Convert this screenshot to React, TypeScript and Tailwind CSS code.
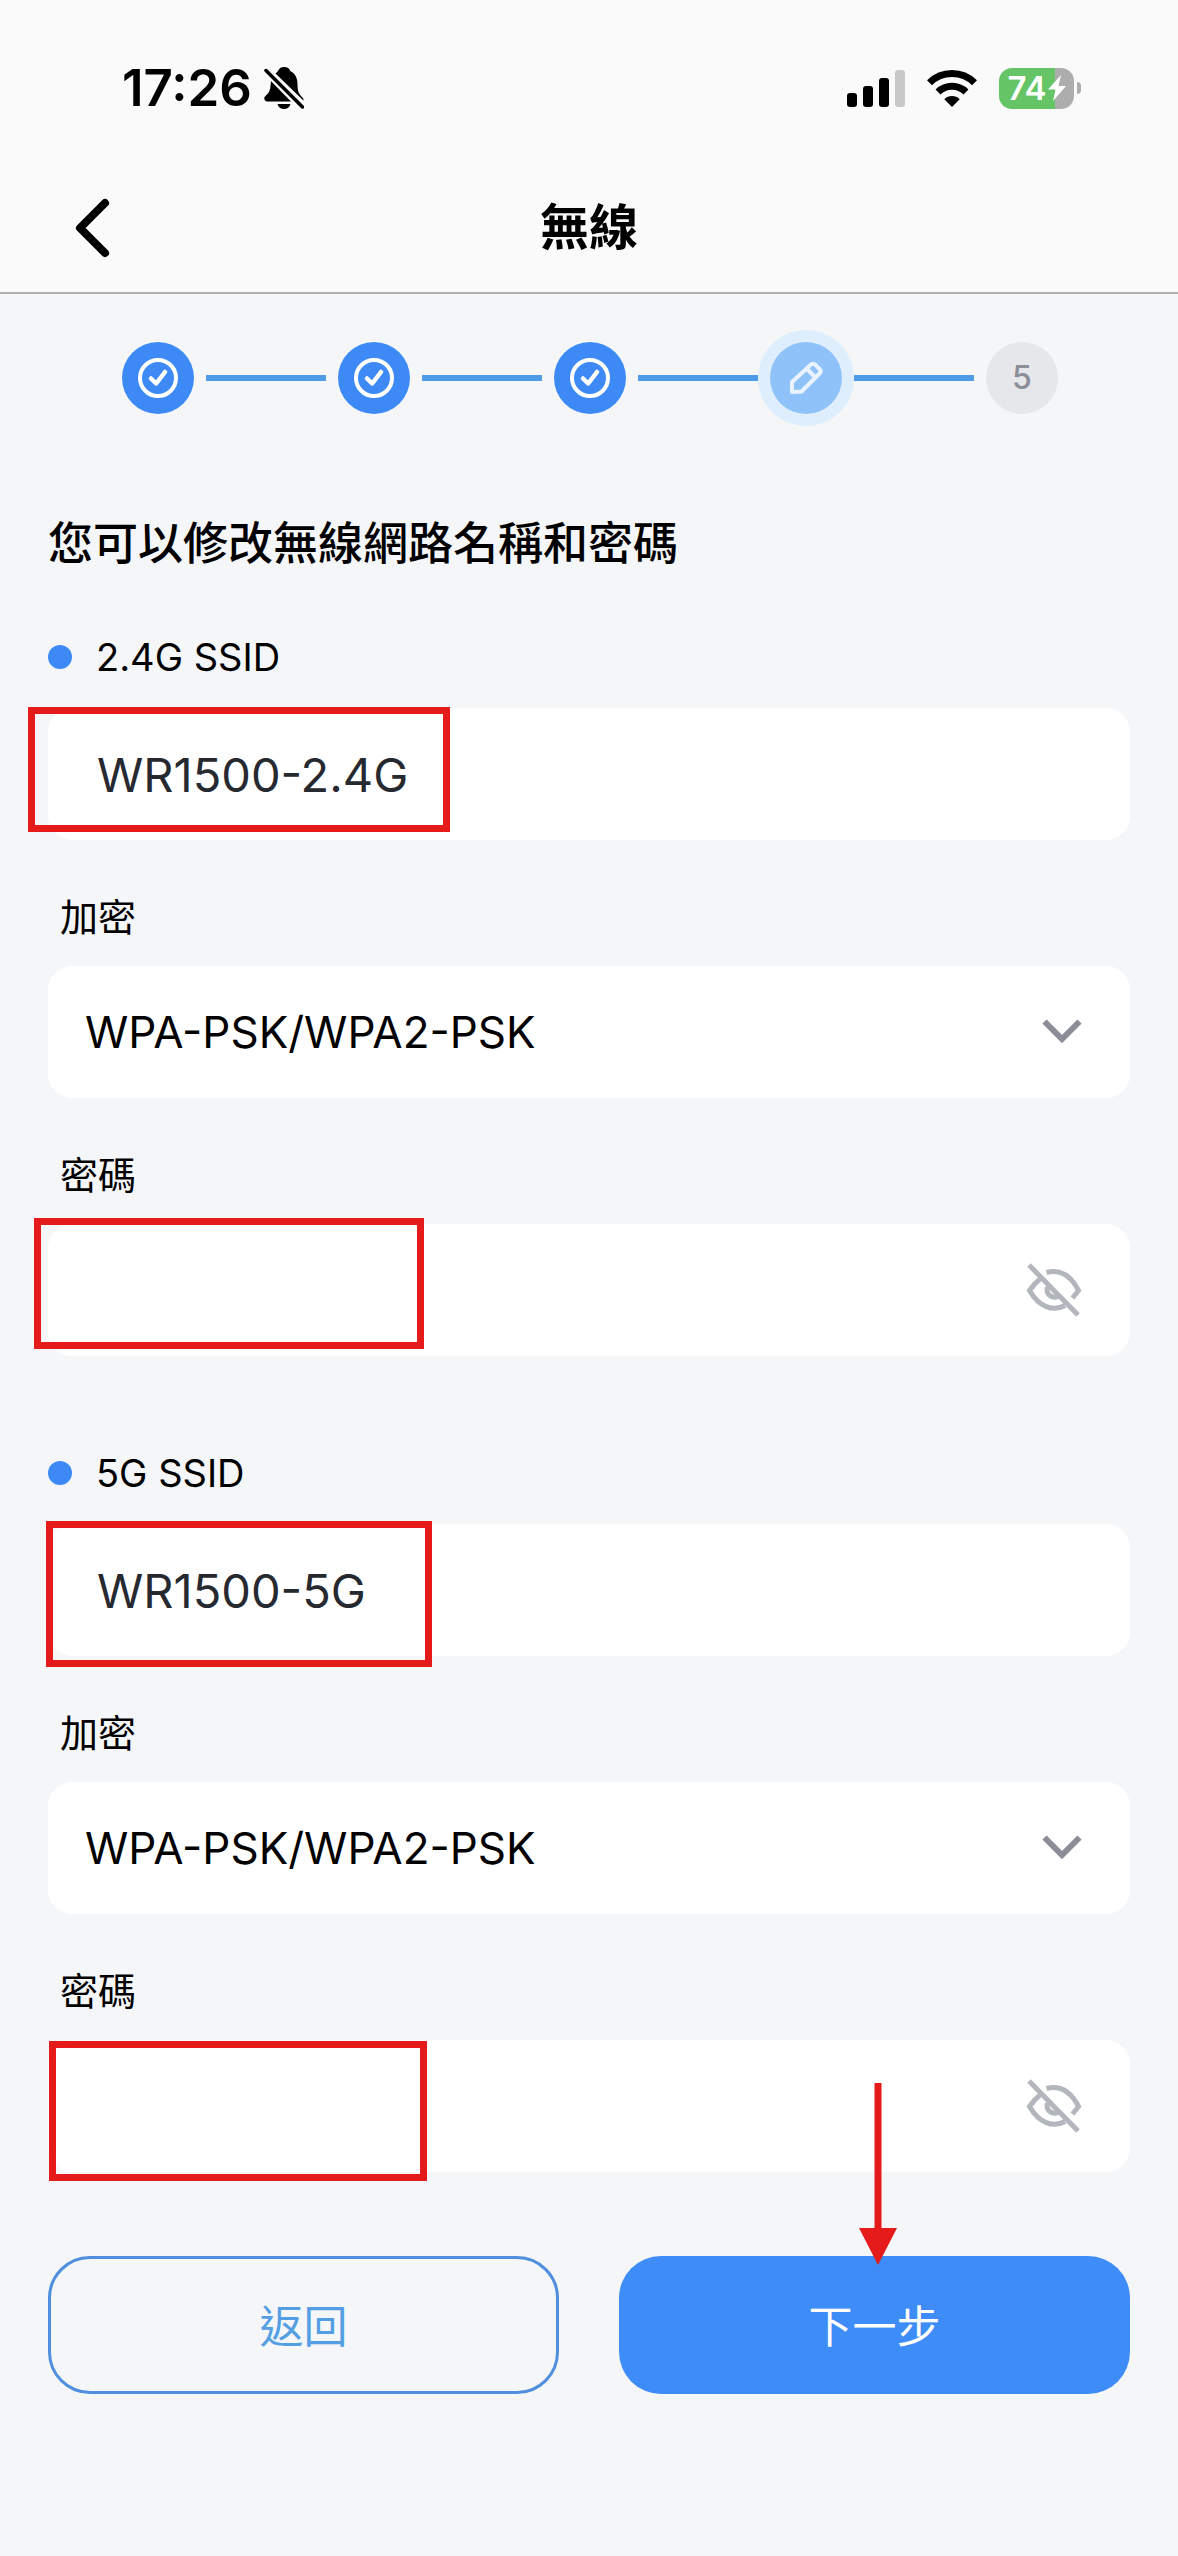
import React, { useState } from "react";

const RING = "pointer-events-none absolute border-[7px] border-[#e51b1b]";

function BellOff() {
  return (
    <svg width="40" height="42" viewBox="0 0 40 42" aria-hidden="true">
      <path d="M20 0c3.400 0 5.600 1.600 6.200 4C31 6 33.500 11 33.500 17c0 8 1.500 10 5 13.500 1 1 1.200 2 .9 3L11.500 6.500C12.500 5.500 13.400 4.800 14 4 15 1.600 17 0 20 0z" fill="#000" />
      <path d="M7 14 27 34.500H3.500C1 34.500 0 32 .4 30.500 1 28.500 6 27 6.500 19z" fill="#000" />
      <path d="M13.500 37h13c-.8 3.300-3.400 5-6.500 5s-5.700-1.700-6.500-5z" fill="#000" />
      <path d="M2 3.500 38.500 40" stroke="#fafafa" strokeWidth="7" />
      <path d="M2 3.500 38.500 40" stroke="#000" strokeWidth="3.500" strokeLinecap="round" />
    </svg>
  );
}

function Signal() {
  return (
    <svg width="58" height="37" viewBox="0 0 58 37" aria-hidden="true">
      <rect x="0" y="23" width="10" height="14" rx="3" fill="#000" />
      <rect x="16" y="16" width="10" height="21" rx="3" fill="#000" />
      <rect x="32" y="8" width="10" height="29" rx="3" fill="#000" />
      <rect x="48" y="0" width="10" height="37" rx="3" fill="#c8c8c8" />
    </svg>
  );
}

function Wifi() {
  return (
    <svg width="50" height="37" viewBox="0 0 50 37" aria-hidden="true">
      <path d="M2.500 12.800A32 32 0 0 1 47.500 12.800" fill="none" stroke="#000" strokeWidth="7" />
      <path d="M11 22A20 20 0 0 1 39 22" fill="none" stroke="#000" strokeWidth="7" />
      <path d="M25 37 17.300 29.200A11 11 0 0 1 32.700 29.200z" fill="#000" />
    </svg>
  );
}

function Battery() {
  return (
    <div className="flex items-center gap-[3px]" role="img" aria-label="74%">
      <div className="flex h-[41px] w-[75px] items-center justify-center gap-[1px] overflow-hidden rounded-[13px] bg-[linear-gradient(to_right,#65c466_56px,#adadad_56px)] text-white">
        <span className="text-[33px] leading-[41px] font-semibold">74</span>
        <svg width="18" height="26" viewBox="0 0 18 26" aria-hidden="true">
          <path d="M13 0 0 14.500h7.500L5 26 18 11h-7.500z" fill="#fff" />
        </svg>
      </div>
      <div className="h-[12px] w-[4px] rounded-r-full bg-[#adadad]" />
    </div>
  );
}

function CheckIcon() {
  return (
    <svg width="72" height="72" viewBox="0 0 72 72" fill="none" stroke="#fff" aria-hidden="true">
      <circle cx="36" cy="36" r="18" strokeWidth="4" />
      <path d="M29 36.500 34.200 41.500 43 30" strokeWidth="4.500" strokeLinecap="round" strokeLinejoin="round" />
    </svg>
  );
}

function PencilIcon() {
  return (
    <svg width="72" height="72" viewBox="0 0 72 72" fill="none" stroke="#e9f4fe" strokeWidth="4" strokeLinejoin="round" aria-hidden="true">
      <path d="M22 50V40L41 22.500Q43 21 45 22.500L49.500 27Q51.500 29 50 31L31.500 49.500z" />
      <path d="M37 27 45 35" />
    </svg>
  );
}

function EyeOff() {
  return (
    <svg width="56" height="56" viewBox="0 0 56 56" fill="none" stroke="#b4b6be" strokeWidth="5" aria-hidden="true">
      <path d="M3 3 52 53" />
      <path d="M20.500 10.500C34 7 45 14 52.500 28.500L46.500 36" />
      <path d="M14 17Q8 22 3.500 28.500C13 45 27 50 39 43.500" />
      <path d="M21.500 25C19.500 31 25 37.500 32.500 34.500" />
    </svg>
  );
}

function Stepper() {
  const steps = ["done", "done", "done", "active", "todo"];
  return (
    <ol className="flex items-center pt-12 pr-[120px] pl-[122px]">
      {steps.map((s, i) => (
        <React.Fragment key={i}>
          {i > 0 && (
            <li aria-hidden="true" className="mx-3 h-[6px] flex-1 bg-[#4d9ae6]" />
          )}
          <li
            className={
              s === "done"
                ? "size-[72px] rounded-full bg-[#3d8af7]"
                : s === "active"
                  ? "size-[72px] rounded-full bg-[#8fc2f9] ring-12 ring-[#deeefd]"
                  : "flex size-[72px] items-center justify-center rounded-full bg-[#e6e7ea] text-[32px] font-medium text-[#8b8e98]"
            }
          >
            {s === "done" ? <CheckIcon /> : s === "active" ? <PencilIcon /> : i + 1}
          </li>
        </React.Fragment>
      ))}
    </ol>
  );
}

type BandProps = {
  id: string;
  title: string;
  ssid: string;
  ssidMark: string;
  passMark: string;
};

function Band({ id, title, ssid, ssidMark, passMark }: BandProps) {
  const [name, setName] = useState(ssid);
  const [pass, setPass] = useState("");
  const [shown, setShown] = useState(false);
  return (
    <section>
      <div className="flex h-[54px] items-center gap-6">
        <span className="size-6 rounded-full bg-[#3d8af7]" />
        <label htmlFor={id + "-ssid"} className="text-[38px] leading-[54px]">
          {title}
        </label>
      </div>
      <div className="relative mt-6">
        <input
          id={id + "-ssid"}
          value={name}
          onChange={(e) => setName(e.target.value)}
          className="block h-[132px] w-full rounded-3xl bg-white px-[49px] text-[47px] text-[#262930] outline-none"
        />
        <div className={RING + " " + ssidMark} />
      </div>
      <label htmlFor={id + "-enc"} className="mt-[50px] block px-3 text-[38px] leading-[54px]">
        加密
      </label>
      <div className="relative mt-[22px]">
        <select
          id={id + "-enc"}
          className="block h-[132px] w-full appearance-none rounded-3xl bg-white px-[37px] text-[44px] outline-none"
        >
          <option>WPA-PSK/WPA2-PSK</option>
        </select>
        <svg className="pointer-events-none absolute top-[53px] right-12 h-6 w-10" viewBox="0 0 40 24" fill="none" stroke="#8b8e98" strokeWidth="6" aria-hidden="true">
          <path d="M2.500 2.500 20 20 37.500 2.500" />
        </svg>
      </div>
      <label htmlFor={id + "-pass"} className="mt-[50px] block px-3 text-[38px] leading-[54px]">
        密碼
      </label>
      <div className="relative mt-[22px]">
        <input
          id={id + "-pass"}
          type={shown ? "text" : "password"}
          value={pass}
          onChange={(e) => setPass(e.target.value)}
          className="block h-[132px] w-full rounded-3xl bg-white pr-[140px] pl-[49px] text-[47px] text-[#262930] outline-none"
        />
        <button
          type="button"
          aria-label="顯示密碼"
          onClick={() => setShown(!shown)}
          className="absolute top-[38px] right-12"
        >
          <EyeOff />
        </button>
        <div className={RING + " " + passMark} />
      </div>
    </section>
  );
}

export default function App() {
  return (
    <div className="min-h-screen bg-[#f4f6f8] font-['Inter','Noto_Sans_CJK_TC',sans-serif] text-black">
      <header className="border-b-2 border-[#b0b1b3] bg-[#fafafa]">
        <div className="flex h-[160px] items-center justify-between pt-[16px] pr-[97px] pl-[122px]">
          <div className="flex items-center gap-3">
            <span className="text-[51px] leading-[60px] font-semibold">17:26</span>
            <BellOff />
          </div>
          <div className="flex items-center gap-[22px]">
            <Signal />
            <Wifi />
            <Battery />
          </div>
        </div>
        <div className="grid h-[132px] grid-cols-[1fr_auto_1fr] items-center px-[72px] pt-1">
          <button type="button" aria-label="返回上一頁" className="justify-self-start">
            <svg width="42" height="60" viewBox="0 0 42 60" fill="none" stroke="#000" strokeWidth="8" strokeLinecap="round" strokeLinejoin="round" aria-hidden="true">
              <path d="M33 5 8 30 33 55" />
            </svg>
          </button>
          <h1 className="text-[49px] leading-[72px] font-bold">無線</h1>
        </div>
      </header>
      <main>
        <Stepper />
        <form className="px-12" onSubmit={(e) => e.preventDefault()}>
          <h2 className="mt-[94px] text-[45px] leading-[72px] font-medium">
            您可以修改無線網路名稱和密碼
          </h2>
          <div className="mt-[50px]">
            <Band
              id="b24"
              title="2.4G SSID"
              ssid="WR1500-2.4G"
              ssidMark="-top-px -left-5 h-[125px] w-[422px]"
              passMark="-top-[6px] -left-[14px] h-[131px] w-[390px]"
            />
          </div>
          <div className="mt-[90px]">
            <Band
              id="b5"
              title="5G SSID"
              ssid="WR1500-5G"
              ssidMark="-top-[3px] -left-[2px] h-[146px] w-[386px]"
              passMark="top-px left-px h-[140px] w-[378px]"
            />
          </div>
          <div className="mt-[84px] grid grid-cols-2 gap-[60px] pb-[162px]">
            <button type="button" className="h-[138px] rounded-[42px] border-[3px] border-[#4f8fde] pt-1 text-[44px] text-[#549ee4]">
              返回
            </button>
            <div className="relative">
              <button type="submit" className="h-[138px] w-full rounded-[42px] bg-[#3e8cf8] pt-1 text-[44px] text-white">
                下一步
              </button>
              <svg className="pointer-events-none absolute -top-[173px] left-[240px] h-[182px] w-[38px]" viewBox="0 0 38 182" fill="#e51b1b" aria-hidden="true">
                <path d="M15.500 0h7v145H38L19 182 0 145h15.500z" />
              </svg>
            </div>
          </div>
        </form>
      </main>
    </div>
  );
}
